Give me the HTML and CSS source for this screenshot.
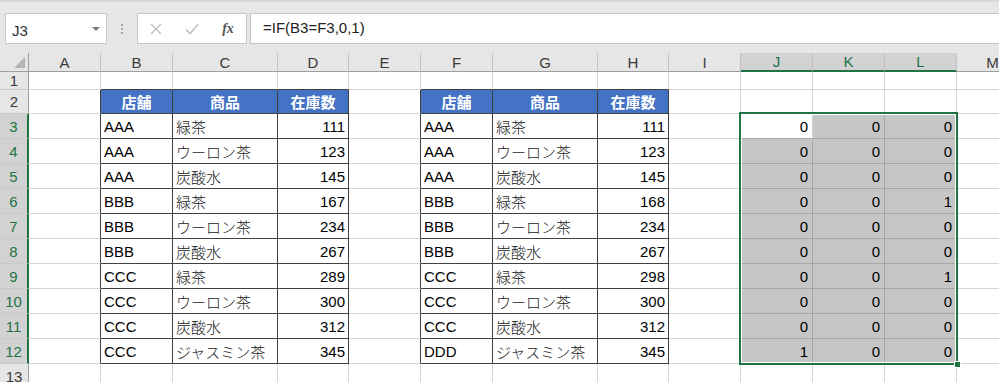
FILE: index.html
```html
<!DOCTYPE html>
<html lang="ja">
<head>
    <meta charset="UTF-8">
    <meta name="viewport" content="width=device-width, initial-scale=1.0">
    <title>Excel - IF比較</title>
    <link rel="stylesheet" href="styles.css">
</head>
<body>
    <div class="top"></div>

    <div class="fbar">
        <div class="namebox">
            <span class="name">J3</span>
            <span class="drop"></span>
        </div>
        <div class="grip"><i></i><i></i><i></i></div>
        <div class="fxbox">
            <span class="fxbtn">
                <svg width="12" height="12" viewBox="0 0 12 12"><path d="M1 1L11 11M11 1L1 11" stroke="#bdbdbd" stroke-width="1.3" fill="none"/></svg>
            </span>
            <span class="fxbtn">
                <svg width="14" height="12" viewBox="0 0 14 12"><path d="M1 6.5L5 10.5L13 1.5" stroke="#c2c2c2" stroke-width="1.7" fill="none"/></svg>
            </span>
            <span class="fxbtn fx">fx</span>
        </div>
        <div class="formula">=IF(B3=F3,0,1)</div>
    </div>

    <div class="sheet">
        <!-- column headers -->
        <div class="corner"><span class="tri"></span></div>
        <div class="ch">A</div>
        <div class="ch">B</div>
        <div class="ch">C</div>
        <div class="ch">D</div>
        <div class="ch">E</div>
        <div class="ch">F</div>
        <div class="ch">G</div>
        <div class="ch">H</div>
        <div class="ch">I</div>
        <div class="ch on">J</div>
        <div class="ch on">K</div>
        <div class="ch on">L</div>
        <div class="ch">M</div>

        <!-- 1 -->
        <div class="rh">1</div>
        <div class="c"></div>
        <div class="c bt"></div><div class="c bt"></div><div class="c bt"></div>
        <div class="c"></div>
        <div class="c bt"></div><div class="c bt"></div><div class="c bt"></div>
        <div class="c"></div>
        <div class="c"></div><div class="c"></div><div class="c"></div><div class="c"></div>

        <!-- 2 -->
        <div class="rh">2</div>
        <div class="c bl"></div>
        <div class="c th">店舗</div><div class="c th">商品</div><div class="c th">在庫数</div>
        <div class="c bl"></div>
        <div class="c th">店舗</div><div class="c th">商品</div><div class="c th">在庫数</div>
        <div class="c"></div>
        <div class="c"></div><div class="c"></div><div class="c"></div><div class="c"></div>

        <!-- 3 -->
        <div class="rh on">3</div>
        <div class="c bl"></div>
        <div class="c tb">AAA</div><div class="c tb jp">緑茶</div><div class="c tb num">111</div>
        <div class="c bl"></div>
        <div class="c tb">AAA</div><div class="c tb jp">緑茶</div><div class="c tb num">111</div>
        <div class="c"></div>
        <div class="c num res act">0</div><div class="c num res sel">0</div><div class="c num res sel">0</div>
        <div class="c"></div>

        <!-- 4 -->
        <div class="rh on">4</div>
        <div class="c bl"></div>
        <div class="c tb">AAA</div><div class="c tb jp">ウーロン茶</div><div class="c tb num">123</div>
        <div class="c bl"></div>
        <div class="c tb">AAA</div><div class="c tb jp">ウーロン茶</div><div class="c tb num">123</div>
        <div class="c"></div>
        <div class="c num res sel">0</div><div class="c num res sel">0</div><div class="c num res sel">0</div>
        <div class="c"></div>

        <!-- 5 -->
        <div class="rh on">5</div>
        <div class="c bl"></div>
        <div class="c tb">AAA</div><div class="c tb jp">炭酸水</div><div class="c tb num">145</div>
        <div class="c bl"></div>
        <div class="c tb">AAA</div><div class="c tb jp">炭酸水</div><div class="c tb num">145</div>
        <div class="c"></div>
        <div class="c num res sel">0</div><div class="c num res sel">0</div><div class="c num res sel">0</div>
        <div class="c"></div>

        <!-- 6 -->
        <div class="rh on">6</div>
        <div class="c bl"></div>
        <div class="c tb">BBB</div><div class="c tb jp">緑茶</div><div class="c tb num">167</div>
        <div class="c bl"></div>
        <div class="c tb">BBB</div><div class="c tb jp">緑茶</div><div class="c tb num">168</div>
        <div class="c"></div>
        <div class="c num res sel">0</div><div class="c num res sel">0</div><div class="c num res sel">1</div>
        <div class="c"></div>

        <!-- 7 -->
        <div class="rh on">7</div>
        <div class="c bl"></div>
        <div class="c tb">BBB</div><div class="c tb jp">ウーロン茶</div><div class="c tb num">234</div>
        <div class="c bl"></div>
        <div class="c tb">BBB</div><div class="c tb jp">ウーロン茶</div><div class="c tb num">234</div>
        <div class="c"></div>
        <div class="c num res sel">0</div><div class="c num res sel">0</div><div class="c num res sel">0</div>
        <div class="c"></div>

        <!-- 8 -->
        <div class="rh on">8</div>
        <div class="c bl"></div>
        <div class="c tb">BBB</div><div class="c tb jp">炭酸水</div><div class="c tb num">267</div>
        <div class="c bl"></div>
        <div class="c tb">BBB</div><div class="c tb jp">炭酸水</div><div class="c tb num">267</div>
        <div class="c"></div>
        <div class="c num res sel">0</div><div class="c num res sel">0</div><div class="c num res sel">0</div>
        <div class="c"></div>

        <!-- 9 -->
        <div class="rh on">9</div>
        <div class="c bl"></div>
        <div class="c tb">CCC</div><div class="c tb jp">緑茶</div><div class="c tb num">289</div>
        <div class="c bl"></div>
        <div class="c tb">CCC</div><div class="c tb jp">緑茶</div><div class="c tb num">298</div>
        <div class="c"></div>
        <div class="c num res sel">0</div><div class="c num res sel">0</div><div class="c num res sel">1</div>
        <div class="c"></div>

        <!-- 10 -->
        <div class="rh on">10</div>
        <div class="c bl"></div>
        <div class="c tb">CCC</div><div class="c tb jp">ウーロン茶</div><div class="c tb num">300</div>
        <div class="c bl"></div>
        <div class="c tb">CCC</div><div class="c tb jp">ウーロン茶</div><div class="c tb num">300</div>
        <div class="c"></div>
        <div class="c num res sel">0</div><div class="c num res sel">0</div><div class="c num res sel">0</div>
        <div class="c"></div>

        <!-- 11 -->
        <div class="rh on">11</div>
        <div class="c bl"></div>
        <div class="c tb">CCC</div><div class="c tb jp">炭酸水</div><div class="c tb num">312</div>
        <div class="c bl"></div>
        <div class="c tb">CCC</div><div class="c tb jp">炭酸水</div><div class="c tb num">312</div>
        <div class="c"></div>
        <div class="c num res sel">0</div><div class="c num res sel">0</div><div class="c num res sel">0</div>
        <div class="c"></div>

        <!-- 12 -->
        <div class="rh on">12</div>
        <div class="c bl"></div>
        <div class="c tb">CCC</div><div class="c tb jp">ジャスミン茶</div><div class="c tb num">345</div>
        <div class="c bl"></div>
        <div class="c tb">DDD</div><div class="c tb jp">ジャスミン茶</div><div class="c tb num">345</div>
        <div class="c"></div>
        <div class="c num res sel">1</div><div class="c num res sel">0</div><div class="c num res sel">0</div>
        <div class="c"></div>

        <!-- 13 -->
        <div class="rh">13</div>
        <div class="c"></div>
        <div class="c"></div><div class="c"></div><div class="c"></div>
        <div class="c"></div>
        <div class="c"></div><div class="c"></div><div class="c"></div>
        <div class="c"></div>
        <div class="c"></div><div class="c"></div><div class="c"></div><div class="c"></div>

        <!-- selection J3:L12 -->
        <div class="frame"><span class="handle"></span></div>
    </div>
</body>
</html>
```

FILE: styles.css
```css
* {
    box-sizing: border-box;
}

body {
    margin: 0;
    background-color: #e6e6e6;
    font-family: "Liberation Sans", "Noto Sans CJK JP", sans-serif;
    color: #000;
    overflow: hidden;
    height: 382px;
}

.top {
    height: 13px;
    border-top: 2px solid #d9d9d9;
    background-color: #e8e8e8;
}

/* formula bar */
.fbar {
    display: flex;
    height: 31px;
    padding-left: 5px;
    margin-bottom: 9px;
}

.namebox {
    width: 102px;
    background-color: #fff;
    border: 1px solid #c6c6c6;
    display: flex;
    align-items: center;
    justify-content: space-between;
    padding: 3px 6px 0 6px;
}

.name {
    font-size: 15px;
    color: #333;
}

.drop {
    width: 0;
    height: 0;
    border-left: 4px solid transparent;
    border-right: 4px solid transparent;
    border-top: 4px solid #7a7a7a;
    margin-top: -3px;
}

.grip {
    width: 30px;
    display: flex;
    flex-direction: column;
    align-items: center;
    justify-content: center;
    gap: 2px;
}

.grip i {
    width: 2px;
    height: 2px;
    background-color: #a8a8a8;
}

.fxbox {
    width: 110px;
    background-color: #fff;
    border: 1px solid #c6c6c6;
    display: flex;
    align-items: center;
}

.fxbtn {
    width: 36px;
    display: flex;
    justify-content: center;
    align-items: center;
}

.fx {
    font-family: "Liberation Serif", serif;
    font-style: italic;
    font-weight: bold;
    font-size: 14px;
    color: #555;
}

.formula {
    flex: 1;
    margin-left: 3px;
    margin-right: -10px;
    background-color: #fff;
    border: 1px solid #c6c6c6;
    padding: 0 12px;
    font-size: 15px;
    line-height: 28px;
    color: #222;
}

/* sheet grid */
.sheet {
    position: relative;
    display: grid;
    width: max-content;
    grid-template-columns: 29px 72px 72px 105px 71px 72px 72px 105px 71px 72px 72px 72px 72px 72px;
    grid-template-rows: 19px 18px 24px repeat(10, 25px) 25px;
    background-color: #fff;
}

.corner,
.ch,
.rh {
    background-color: #e6e6e6;
    color: #3a3a3a;
    font-size: 15px;
    display: flex;
    align-items: center;
    justify-content: center;
}

.corner {
    border-right: 1px solid #9e9e9e;
    border-bottom: 1px solid #9e9e9e;
    align-items: flex-end;
    justify-content: flex-end;
    padding: 0 3px 3px 0;
}

.tri {
    width: 0;
    height: 0;
    border-left: 11px solid transparent;
    border-bottom: 11px solid #b5b5b5;
}

.ch {
    border-right: 1px solid #c3c3c3;
    border-bottom: 1px solid #9e9e9e;
}

.rh {
    border-right: 1px solid #9e9e9e;
    border-bottom: 1px solid #cacaca;
}

.ch.on {
    background-color: #d2d2d2;
    color: #217346;
    border-bottom: 2px solid #217346;
}

.rh.on {
    background-color: #d2d2d2;
    color: #217346;
    border-right: 2px solid #217346;
}

.c {
    border-right: 1px solid #d4d4d4;
    border-bottom: 1px solid #d4d4d4;
    font-size: 15px;
    display: flex;
    align-items: center;
    padding: 0 3px;
    white-space: nowrap;
    overflow: hidden;
}

.bl {
    border-right-color: #404040;
}

.bt {
    border-bottom-color: #404040;
}

.tb {
    border-right-color: #404040;
    border-bottom-color: #404040;
}

.jp {
    font-size: 15px;
    font-weight: 300;
    color: #222;
}

.num {
    justify-content: flex-end;
}

.th {
    background-color: #4472c4;
    color: #fff;
    font-size: 15px;
    font-weight: bold;
    justify-content: center;
    border-right-color: #404040;
    border-bottom-color: #404040;
}

.res {
    padding-right: 4px;
}

.sel {
    background-color: #c6c6c6;
    border-right-color: #a6a6a6;
    border-bottom-color: #a6a6a6;
}

.act {
    border-bottom-color: #a6a6a6;
}

.frame {
    position: absolute;
    grid-column: 11 / 14;
    grid-row: 4 / 14;
    top: -2px;
    left: -2px;
    right: -1px;
    bottom: -1px;
    border: 2px solid #217346;
    box-shadow: inset 0 0 0 1px #fff;
}

.handle {
    position: absolute;
    right: -5px;
    bottom: -5px;
    width: 7px;
    height: 7px;
    background-color: #217346;
    border: 1px solid #fff;
}
```
